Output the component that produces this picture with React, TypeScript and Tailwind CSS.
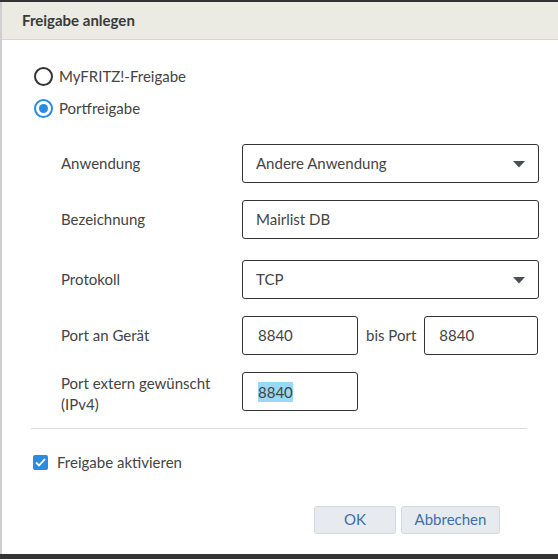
const font = { fontFamily: "Lato, 'Noto Sans', sans-serif" };

const Caret = () => (
  <svg width="12" height="7" viewBox="0 0 12 7" className="absolute right-[13px] top-[16px]">
    <path d="M0 0h12L6 6.5z" fill="#4a4f55" />
  </svg>
);

const Row = ({ label, top, children }: { label: React.ReactNode; top: string; children: React.ReactNode }) => (
  <div className={`flex items-start ${top}`}>
    <div className="w-[240px] shrink-0 pl-[59px] pt-[9px] text-[15px] leading-[21px] text-[#444]">{label}</div>
    {children}
  </div>
);

export default function App() {
  return (
    <div className="w-[558px] h-[559px] bg-white relative overflow-hidden text-[#444]" style={font}>
      <div className="h-[2px] bg-[#333]" />
      <div className="border-l-2 border-[#cfcfcf] h-[552px] flex flex-col">
        <div className="h-[38px] bg-[#ebeae3] border-b border-[#d6d6d0] flex items-center pl-[20px]">
          <span className="text-[15px] font-bold text-[#3a3a3a]">Freigabe anlegen</span>
        </div>

        <div className="pt-[26px] pl-[32px]">
          <label className="flex items-center gap-[6px] h-[20px]">
            <span className="w-[19px] h-[19px] rounded-full border-2 border-[#333]" />
            <span className="text-[15px]">MyFRITZ!-Freigabe</span>
          </label>
          <label className="flex items-center gap-[6px] h-[20px] mt-[12px]">
            <span className="w-[19px] h-[19px] rounded-full border-2 border-[#2a8be3] flex items-center justify-center">
              <span className="w-[9px] h-[9px] rounded-full bg-[#2a8be3]" />
            </span>
            <span className="text-[15px]">Portfreigabe</span>
          </label>
        </div>

        <div className="pt-[26px]">
          <Row label="Anwendung" top="">
            <div className="relative w-[297px] h-[39px] border border-[#333] rounded-[3px] pl-[13px] flex items-center text-[15px]">
              Andere Anwendung
              <Caret />
            </div>
          </Row>
          <Row label="Bezeichnung" top="mt-[17px]">
            <div className="w-[297px] h-[39px] border border-[#333] rounded-[3px] pl-[13px] flex items-center text-[15px]">
              Mairlist DB
            </div>
          </Row>
          <Row label="Protokoll" top="mt-[21px]">
            <div className="relative w-[297px] h-[39px] border border-[#333] rounded-[3px] pl-[13px] flex items-center text-[15px]">
              TCP
              <Caret />
            </div>
          </Row>
          <Row label="Port an Gerät" top="mt-[17px]">
            <div className="flex items-center">
              <div className="w-[116px] h-[39px] border border-[#333] rounded-[3px] pl-[15px] flex items-center text-[15px]">8840</div>
              <span className="px-[8px] text-[15px]">bis Port</span>
              <div className="w-[114px] h-[39px] border border-[#333] rounded-[3px] pl-[14px] flex items-center text-[15px]">8840</div>
            </div>
          </Row>
          <div className="flex items-start mt-[17px]">
            <div className="w-[240px] shrink-0 pl-[59px] pt-[1px] text-[15px] leading-[21px] text-[#444]">
              Port extern gewünscht
              <br />
              (IPv4)
            </div>
            <div className="w-[116px] h-[39px] border border-[#333] rounded-[3px] pl-[15px] flex items-center text-[15px]">
              <span className="bg-[#99d8f7] leading-[20px]">8840</span>
            </div>
          </div>
        </div>

        <div className="mt-[13px] ml-[29px] w-[496px] h-px bg-[#dedede]" />

        <label className="flex items-center gap-[9px] ml-[31px] mt-[22px]">
          <span className="w-[15px] h-[15px] rounded-[2px] bg-[#2a8be3] flex items-center justify-center">
            <svg width="11" height="9" viewBox="0 0 11 9">
              <path d="M1 4.5l3 3L10 1" stroke="white" strokeWidth="1.8" fill="none" />
            </svg>
          </span>
          <span className="text-[15px]">Freigabe aktivieren</span>
        </label>

        <div className="flex justify-end gap-[5px] pr-[58px] mt-[32px]">
          <button className="w-[82px] h-[28px] bg-[#e7ebef] border border-[#d3d8dd] rounded-[3px] text-[15px] text-[#3f6ea8]">OK</button>
          <button className="w-[99px] h-[28px] bg-[#e7ebef] border border-[#d3d8dd] rounded-[3px] text-[15px] text-[#3f6ea8]">Abbrechen</button>
        </div>
      </div>
      <div className="absolute bottom-0 left-0 w-full h-[5px] bg-[#333]" />
    </div>
  );
}
